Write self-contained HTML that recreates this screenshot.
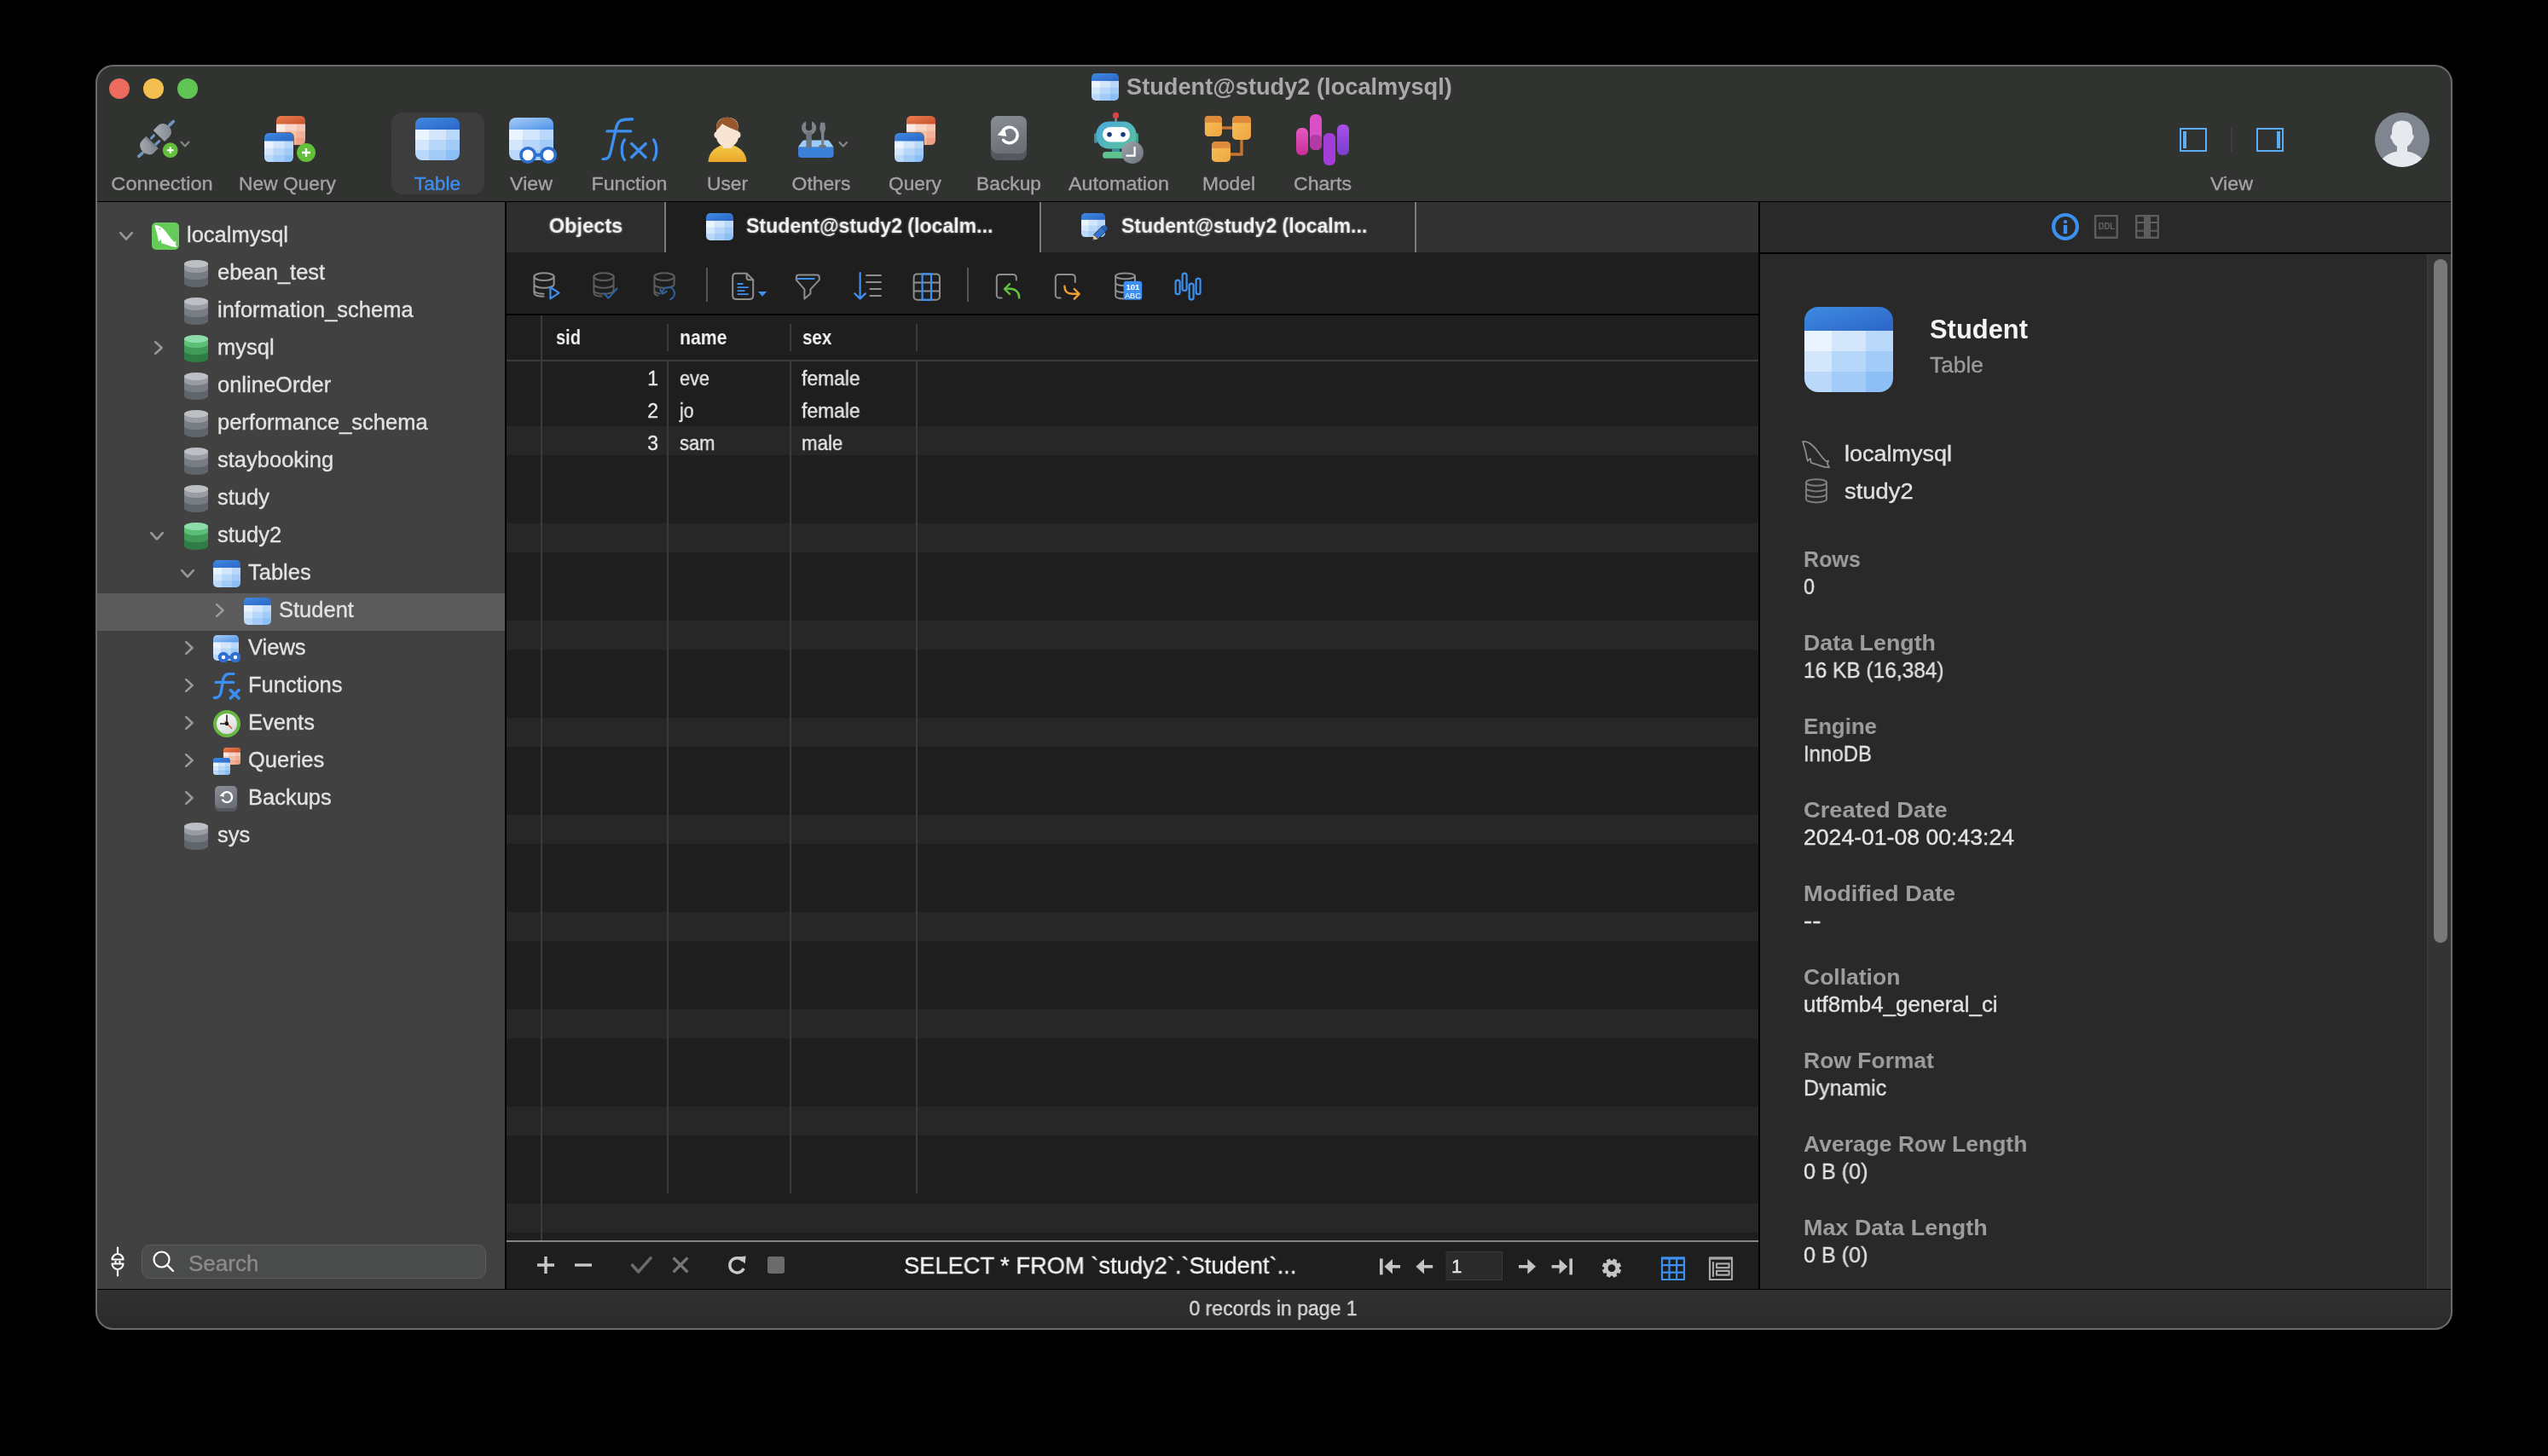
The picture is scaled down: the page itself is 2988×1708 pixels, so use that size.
<!DOCTYPE html>
<html><head><meta charset="utf-8"><title>Navicat</title>
<style>
html,body{margin:0;padding:0;background:#000;width:2988px;height:1708px;overflow:hidden}
body{position:relative;font-family:"Liberation Sans", sans-serif;-webkit-font-smoothing:antialiased}
svg{display:block}
.t{will-change:transform}
</style></head><body>
<svg width="0" height="0" style="position:absolute"><defs><linearGradient id="gBlueH" x1="0" y1="0" x2="1" y2="1"><stop offset="0" stop-color="#3f8be2"/><stop offset="1" stop-color="#2a64c5"/></linearGradient>
<linearGradient id="gOrH" x1="0" y1="0" x2="1" y2="1"><stop offset="0" stop-color="#ec7d50"/><stop offset="1" stop-color="#c6502c"/></linearGradient>
<linearGradient id="gViewH" x1="0" y1="0" x2="1" y2="1"><stop offset="0" stop-color="#a9cdf6"/><stop offset="1" stop-color="#4a92e8"/></linearGradient>
<linearGradient id="gGray" x1="0" y1="0" x2="0.3" y2="1"><stop offset="0" stop-color="#8a8f96"/><stop offset="1" stop-color="#6c7178"/></linearGradient>
<linearGradient id="gUser" x1="0" y1="0" x2="0" y2="1"><stop offset="0" stop-color="#f4cc48"/><stop offset="1" stop-color="#e9a62a"/></linearGradient>
<linearGradient id="gRobot" x1="0" y1="0" x2="1" y2="1"><stop offset="0" stop-color="#4aa9de"/><stop offset="1" stop-color="#5cc29a"/></linearGradient>
<linearGradient id="gClock" x1="0" y1="0" x2="1" y2="1"><stop offset="0" stop-color="#9ea4ab"/><stop offset="1" stop-color="#6c727a"/></linearGradient>
<linearGradient id="gModel" x1="0" y1="0" x2="1" y2="1"><stop offset="0" stop-color="#f7c056"/><stop offset="1" stop-color="#eea544"/></linearGradient>
<linearGradient id="gBar1" x1="0" y1="0" x2="0" y2="1"><stop offset="0" stop-color="#e25ac3"/><stop offset="1" stop-color="#c92f96"/></linearGradient>
<linearGradient id="gBar2" x1="0" y1="0" x2="0" y2="1"><stop offset="0" stop-color="#a84fe8"/><stop offset="1" stop-color="#7a3fcf"/></linearGradient>
<linearGradient id="gPlug" x1="0" y1="0" x2="1" y2="1"><stop offset="0" stop-color="#a9aeb5"/><stop offset="1" stop-color="#7e848c"/></linearGradient>

<symbol id="tbl" viewBox="0 0 52 50" preserveAspectRatio="none"><clipPath id="cTbl"><rect width="52" height="50" rx="8"/></clipPath><g clip-path="url(#cTbl)"><rect width="52" height="15" fill="url(#gBlueH)"/><rect x="0" y="14" width="17" height="13" fill="#eaf4fe"/><rect x="16" y="14" width="21" height="13" fill="#d3e6fc"/><rect x="36" y="14" width="16" height="13" fill="#bad9fa"/><rect x="0" y="26" width="17" height="13" fill="#d3e6fc"/><rect x="16" y="26" width="21" height="13" fill="#b7d7fa"/><rect x="36" y="26" width="16" height="13" fill="#a2cbf8"/><rect x="0" y="38" width="17" height="12" fill="#bad9fa"/><rect x="16" y="38" width="21" height="12" fill="#a2cbf8"/><rect x="36" y="38" width="16" height="12" fill="#8cbff6"/></g></symbol>

<symbol id="tblo" viewBox="0 0 52 50" preserveAspectRatio="none"><clipPath id="cTblo"><rect width="52" height="50" rx="8"/></clipPath><g clip-path="url(#cTblo)"><rect width="52" height="15" fill="url(#gOrH)"/><rect x="0" y="14" width="17" height="13" fill="#fbe9e3"/><rect x="16" y="14" width="21" height="13" fill="#f8d5c7"/><rect x="36" y="14" width="16" height="13" fill="#f6c6b2"/><rect x="0" y="26" width="17" height="13" fill="#f8d5c7"/><rect x="16" y="26" width="21" height="13" fill="#f5c0aa"/><rect x="36" y="26" width="16" height="13" fill="#f2b196"/><rect x="0" y="38" width="17" height="12" fill="#f6c6b2"/><rect x="16" y="38" width="21" height="12" fill="#f2b196"/><rect x="36" y="38" width="16" height="12" fill="#eea283"/></g></symbol>

<symbol id="db" viewBox="0 0 28 32" preserveAspectRatio="none">
<path d="M0 4.5V27.5A14 4.5 0 0 0 28 27.5V4.5Z" fill="#60656c"/>
<path d="M0 4.5V18.8A14 4.5 0 0 0 28 18.8V4.5Z" fill="#787d84"/>
<path d="M0 4.5V10.5A14 4.5 0 0 0 28 10.5V4.5Z" fill="#999da3"/>
<ellipse cx="14" cy="4.5" rx="14" ry="4.5" fill="#bcc0c4"/>
</symbol>

<symbol id="dbg" viewBox="0 0 28 32" preserveAspectRatio="none">
<path d="M0 4.5V27.5A14 4.5 0 0 0 28 27.5V4.5Z" fill="#2f7c45"/>
<path d="M0 4.5V18.8A14 4.5 0 0 0 28 18.8V4.5Z" fill="#409b58"/>
<path d="M0 4.5V10.5A14 4.5 0 0 0 28 10.5V4.5Z" fill="#5cbf76"/>
<ellipse cx="14" cy="4.5" rx="14" ry="4.5" fill="#8fdcab"/>
</symbol>

<symbol id="conn" viewBox="0 0 32 32">
<rect width="32" height="32" rx="5" fill="#67cb5a"/>
<path d="M3.2 3.2C5.6 3.1 8 3.5 9.6 4.6C13 6.6 15.6 9.6 18.5 13.4C21 16.8 23.6 20.4 26.6 22.8L28.8 22.4L27.6 25L29.6 29C26.2 29 23.4 28.4 20.8 27.3C18.4 26.3 15.6 25.5 13.2 24.8L11.6 24.4C11.2 22.8 11.2 21.2 10.8 20.2C9.6 20.8 8.8 21.6 8.2 22.6C7.4 20.4 7 17.8 6.6 15.4C6 12.2 5 9.2 4.4 7.2C4 5.6 3.6 4.2 3.2 3.2Z" fill="#fff"/>
<circle cx="9.4" cy="7.4" r="0.9" fill="#67cb5a"/>
</symbol>

<symbol id="views" viewBox="0 0 32 32">
<use href="#tblv" x="0" y="0" width="30" height="30"/>
<rect x="14" y="24.4" width="8" height="3.2" fill="#2a66c4"/>
<circle cx="12" cy="26" r="4.3" fill="#fff" stroke="#2f6fcf" stroke-width="4"/>
<circle cx="26" cy="26" r="4.3" fill="#fff" stroke="#2f6fcf" stroke-width="4"/>
</symbol>
<symbol id="tblv" viewBox="0 0 52 50" preserveAspectRatio="none"><clipPath id="cTblv"><rect width="52" height="50" rx="8"/></clipPath><g clip-path="url(#cTblv)"><rect width="52" height="15" fill="url(#gViewH)"/><rect x="0" y="14" width="17" height="13" fill="#eaf4fe"/><rect x="16" y="14" width="21" height="13" fill="#d3e6fc"/><rect x="36" y="14" width="16" height="13" fill="#bad9fa"/><rect x="0" y="26" width="17" height="13" fill="#d3e6fc"/><rect x="16" y="26" width="21" height="13" fill="#b7d7fa"/><rect x="36" y="26" width="16" height="13" fill="#a2cbf8"/><rect x="0" y="38" width="17" height="12" fill="#bad9fa"/><rect x="16" y="38" width="21" height="12" fill="#a2cbf8"/><rect x="36" y="38" width="16" height="12" fill="#8cbff6"/></g></symbol>

<symbol id="func" viewBox="0 0 32 32">
<path d="M1.6 29.4C6.4 29.8 8.4 27.6 9.4 21.8L11.4 9.6C12.2 4.4 14.2 1.6 19.4 1.4C21 1.3 22.6 1.4 23.8 1.6" fill="none" stroke="#3c8ff0" stroke-width="3.4" stroke-linecap="round"/>
<path d="M3.2 11.4H23.6" fill="none" stroke="#3c8ff0" stroke-width="3.4" stroke-linecap="round"/>
<path d="M20.4 20.6L30 30M30 20.6L20.4 30" fill="none" stroke="#3c8ff0" stroke-width="3.6" stroke-linecap="round"/>
</symbol>

<symbol id="events" viewBox="0 0 32 32">
<linearGradient id="gFace" x1="0" y1="0" x2="0.6" y2="1"><stop offset="0" stop-color="#ffffff"/><stop offset="1" stop-color="#d8dadc"/></linearGradient>
<circle cx="16" cy="16" r="16" fill="#67b843"/>
<circle cx="16" cy="16" r="12" fill="url(#gFace)"/>
<path d="M16 5.6V16H8" fill="none" stroke="#222" stroke-width="1.6"/>
<path d="M13.6 13.4L22 21.8" fill="none" stroke="#e4542c" stroke-width="1.5"/>
<circle cx="16" cy="16" r="2.2" fill="#111"/>
</symbol>

<symbol id="queries" viewBox="0 0 32 32">
<use href="#tblo" x="12" y="0" width="20" height="20"/>
<use href="#tbl" x="0" y="12" width="20" height="20"/>
</symbol>

<symbol id="backups" viewBox="0 0 32 32">
<rect x="2" y="1" width="26" height="30" rx="5" fill="#55585d"/>
<rect x="2" y="1" width="26" height="26" rx="5" fill="url(#gGray)"/>
<path d="M11.2 17.6A6 6 0 1 0 11.4 10.4" fill="none" stroke="#fff" stroke-width="2.4" stroke-linecap="round"/>
<path d="M7.6 12.6L11.8 8.4L13 13.8Z" fill="#fff"/>
</symbol>

<symbol id="chevd" viewBox="0 0 16 10"><path d="M1.2 1.2L8 8.6L14.8 1.2" fill="none" stroke="#9a9a9a" stroke-width="2.5" stroke-linecap="round" stroke-linejoin="round"/></symbol>
<symbol id="chevr" viewBox="0 0 10 16"><path d="M1.2 1.2L8.6 8L1.2 14.8" fill="none" stroke="#9a9a9a" stroke-width="2.5" stroke-linecap="round" stroke-linejoin="round"/></symbol>
</defs></svg>
<div style="position:absolute;left:112px;top:76px;width:2764px;height:1484px;border-radius:21px;background:#313331;overflow:hidden"><div style="position:absolute;left:-112px;top:-76px;width:2988px;height:1708px"><div style="position:absolute;left:112px;top:236px;width:2764px;height:1px;background:#000"></div><div style="position:absolute;left:128px;top:92px;width:24px;height:24px;border-radius:12px;background:#ed6a5e"></div><div style="position:absolute;left:168px;top:92px;width:24px;height:24px;border-radius:12px;background:#f4bf4f"></div><div style="position:absolute;left:208px;top:92px;width:24px;height:24px;border-radius:12px;background:#61c554"></div><svg style="position:absolute;left:1280px;top:86px;overflow:visible;" width="32" height="32"><use href="#tbl" width="32" height="32"/></svg><div class="t" style="position:absolute;left:1320.5px;top:89.14px;font-size:27px;line-height:27px;height:27px;color:#a9a9a9;font-weight:700;white-space:nowrap;transform:scaleX(1.0077);transform-origin:0 0;">Student@study2 (localmysql)</div><div style="position:absolute;left:458.5px;top:132px;width:109.5px;height:96px;background:#3c3d3c;border-radius:13px"></div><div class="t" style="position:absolute;left:-210px;width:800px;text-align:center;top:205.47px;font-size:22.6px;line-height:22.6px;height:22.6px;color:#a3a3a3;font-weight:400;white-space:nowrap;-webkit-text-stroke:0.35px #a3a3a3;transform:scaleX(1.0434);transform-origin:50% 0;">Connection</div><div class="t" style="position:absolute;left:-63px;width:800px;text-align:center;top:205.47px;font-size:22.6px;line-height:22.6px;height:22.6px;color:#a3a3a3;font-weight:400;white-space:nowrap;-webkit-text-stroke:0.35px #a3a3a3;transform:scaleX(1.0069);transform-origin:50% 0;">New Query</div><div class="t" style="position:absolute;left:113.20000000000005px;width:800px;text-align:center;top:205.47px;font-size:22.6px;line-height:22.6px;height:22.6px;color:#3e8ef4;font-weight:400;white-space:nowrap;-webkit-text-stroke:0.35px #3e8ef4;transform:scaleX(1.0067);transform-origin:50% 0;">Table</div><div class="t" style="position:absolute;left:222.89999999999998px;width:800px;text-align:center;top:205.47px;font-size:22.6px;line-height:22.6px;height:22.6px;color:#a3a3a3;font-weight:400;white-space:nowrap;-webkit-text-stroke:0.35px #a3a3a3;transform:scaleX(1.0239);transform-origin:50% 0;">View</div><div class="t" style="position:absolute;left:337.5px;width:800px;text-align:center;top:205.47px;font-size:22.6px;line-height:22.6px;height:22.6px;color:#a3a3a3;font-weight:400;white-space:nowrap;-webkit-text-stroke:0.35px #a3a3a3;transform:scaleX(1.0269);transform-origin:50% 0;">Function</div><div class="t" style="position:absolute;left:452.9px;width:800px;text-align:center;top:205.47px;font-size:22.6px;line-height:22.6px;height:22.6px;color:#a3a3a3;font-weight:400;white-space:nowrap;-webkit-text-stroke:0.35px #a3a3a3;transform:scaleX(1.0103);transform-origin:50% 0;">User</div><div class="t" style="position:absolute;left:563.4px;width:800px;text-align:center;top:205.47px;font-size:22.6px;line-height:22.6px;height:22.6px;color:#a3a3a3;font-weight:400;white-space:nowrap;-webkit-text-stroke:0.35px #a3a3a3;transform:scaleX(1.0144);transform-origin:50% 0;">Others</div><div class="t" style="position:absolute;left:672.7px;width:800px;text-align:center;top:205.47px;font-size:22.6px;line-height:22.6px;height:22.6px;color:#a3a3a3;font-weight:400;white-space:nowrap;-webkit-text-stroke:0.35px #a3a3a3;transform:scaleX(1.0042);transform-origin:50% 0;">Query</div><div class="t" style="position:absolute;left:782.75px;width:800px;text-align:center;top:205.47px;font-size:22.6px;line-height:22.6px;height:22.6px;color:#a3a3a3;font-weight:400;white-space:nowrap;-webkit-text-stroke:0.35px #a3a3a3;transform:scaleX(1.0070);transform-origin:50% 0;">Backup</div><div class="t" style="position:absolute;left:911.7px;width:800px;text-align:center;top:205.47px;font-size:22.6px;line-height:22.6px;height:22.6px;color:#a3a3a3;font-weight:400;white-space:nowrap;-webkit-text-stroke:0.35px #a3a3a3;transform:scaleX(1.0321);transform-origin:50% 0;">Automation</div><div class="t" style="position:absolute;left:1041px;width:800px;text-align:center;top:205.47px;font-size:22.6px;line-height:22.6px;height:22.6px;color:#a3a3a3;font-weight:400;white-space:nowrap;-webkit-text-stroke:0.35px #a3a3a3;transform:scaleX(1.0071);transform-origin:50% 0;">Model</div><div class="t" style="position:absolute;left:1150.65px;width:800px;text-align:center;top:205.47px;font-size:22.6px;line-height:22.6px;height:22.6px;color:#a3a3a3;font-weight:400;white-space:nowrap;-webkit-text-stroke:0.35px #a3a3a3;transform:scaleX(1.0232);transform-origin:50% 0;">Charts</div><div class="t" style="position:absolute;left:2217px;width:800px;text-align:center;top:205.47px;font-size:22.6px;line-height:22.6px;height:22.6px;color:#a3a3a3;font-weight:400;white-space:nowrap;-webkit-text-stroke:0.35px #a3a3a3;transform:scaleX(1.0281);transform-origin:50% 0;">View</div><div style="position:absolute;left:112px;top:237px;width:480px;height:1275px;background:#404140"></div><div style="position:absolute;left:592px;top:237px;width:2px;height:1275px;background:#000"></div><div style="position:absolute;left:114px;top:696px;width:478px;height:44px;background:#5b5b5b"></div><div style="position:absolute;left:594px;top:237px;width:1468px;height:59px;background:#323232"></div><div style="position:absolute;left:594px;top:237px;width:186px;height:59px;background:#2d2d2d"></div><div style="position:absolute;left:779px;top:237px;width:2px;height:59px;background:#7a7a7a"></div><div style="position:absolute;left:781px;top:237px;width:438px;height:59px;background:#1e1e1e"></div><div style="position:absolute;left:1219px;top:237px;width:2px;height:59px;background:#7a7a7a"></div><div style="position:absolute;left:1221px;top:237px;width:439px;height:59px;background:#2d2d2d"></div><div style="position:absolute;left:1659px;top:237px;width:2px;height:59px;background:#7a7a7a"></div><div style="position:absolute;left:594px;top:296px;width:1468px;height:72px;background:#1e1e1e"></div><div style="position:absolute;left:594px;top:368px;width:1468px;height:2px;background:#000"></div><div style="position:absolute;left:594px;top:370px;width:1468px;height:1086px;background:#1e1e1e"></div><div style="position:absolute;left:594px;top:500px;width:1468px;height:34px;background:#272727"></div><div style="position:absolute;left:594px;top:614px;width:1468px;height:34px;background:#272727"></div><div style="position:absolute;left:594px;top:728px;width:1468px;height:34px;background:#272727"></div><div style="position:absolute;left:594px;top:842px;width:1468px;height:34px;background:#272727"></div><div style="position:absolute;left:594px;top:956px;width:1468px;height:34px;background:#272727"></div><div style="position:absolute;left:594px;top:1070px;width:1468px;height:34px;background:#272727"></div><div style="position:absolute;left:594px;top:1184px;width:1468px;height:34px;background:#272727"></div><div style="position:absolute;left:594px;top:1298px;width:1468px;height:34px;background:#272727"></div><div style="position:absolute;left:594px;top:1412px;width:1468px;height:34px;background:#272727"></div><div style="position:absolute;left:594px;top:422px;width:1468px;height:2px;background:#3a3a3a"></div><div style="position:absolute;left:634px;top:370px;width:2px;height:1086px;background:#3b3b3b"></div><div style="position:absolute;left:782px;top:380px;width:2px;height:32px;background:#3b3b3b"></div><div style="position:absolute;left:782px;top:424px;width:2px;height:976px;background:#3b3b3b"></div><div style="position:absolute;left:926px;top:380px;width:2px;height:32px;background:#3b3b3b"></div><div style="position:absolute;left:926px;top:424px;width:2px;height:976px;background:#3b3b3b"></div><div style="position:absolute;left:1074px;top:380px;width:2px;height:32px;background:#3b3b3b"></div><div style="position:absolute;left:1074px;top:424px;width:2px;height:976px;background:#3b3b3b"></div><div style="position:absolute;left:594px;top:1455px;width:1468px;height:2px;background:#858585"></div><div style="position:absolute;left:594px;top:1457px;width:1468px;height:55px;background:#1e1e1e"></div><div style="position:absolute;left:2062px;top:237px;width:2px;height:1275px;background:#000"></div><div style="position:absolute;left:2064px;top:237px;width:812px;height:1275px;background:#292929"></div><div style="position:absolute;left:2064px;top:296px;width:812px;height:2px;background:#000"></div><div style="position:absolute;left:2846px;top:298px;width:30px;height:1214px;background:#343434;border-left:1px solid #3d3d3d"></div><div style="position:absolute;left:2854px;top:304px;width:16px;height:802px;background:#787878;border-radius:8px"></div><div style="position:absolute;left:112px;top:1512px;width:2764px;height:1px;background:#000"></div><div style="position:absolute;left:112px;top:1513px;width:2764px;height:47px;background:linear-gradient(#303030,#2a2a2a)"></div><div class="t" style="position:absolute;left:1093px;width:800px;text-align:center;top:1524.41px;font-size:23.5px;line-height:23.5px;height:23.5px;color:#dadada;font-weight:400;white-space:nowrap;-webkit-text-stroke:0.35px #dadada;transform:scaleX(0.9807);transform-origin:50% 0;">0 records in page 1</div><svg style="position:absolute;left:140px;top:271.5px;overflow:visible;" width="16" height="10"><use href="#chevd" width="16" height="10"/></svg><svg style="position:absolute;left:178px;top:261px;overflow:visible;" width="32" height="32"><use href="#conn" width="32" height="32"/></svg><div class="t" style="position:absolute;left:218.6px;top:263.11px;font-size:25.5px;line-height:25.5px;height:25.5px;color:#e2e2e2;font-weight:400;white-space:nowrap;-webkit-text-stroke:0.35px #e2e2e2;">localmysql</div><svg style="position:absolute;left:216px;top:305px;overflow:visible;" width="28" height="32"><use href="#db" width="28" height="32"/></svg><div class="t" style="position:absolute;left:254.6px;top:307.11px;font-size:25.5px;line-height:25.5px;height:25.5px;color:#e2e2e2;font-weight:400;white-space:nowrap;-webkit-text-stroke:0.35px #e2e2e2;">ebean_test</div><svg style="position:absolute;left:216px;top:349px;overflow:visible;" width="28" height="32"><use href="#db" width="28" height="32"/></svg><div class="t" style="position:absolute;left:254.6px;top:351.11px;font-size:25.5px;line-height:25.5px;height:25.5px;color:#e2e2e2;font-weight:400;white-space:nowrap;-webkit-text-stroke:0.35px #e2e2e2;">information_schema</div><svg style="position:absolute;left:181px;top:400px;overflow:visible;" width="10" height="16"><use href="#chevr" width="10" height="16"/></svg><svg style="position:absolute;left:216px;top:393px;overflow:visible;" width="28" height="32"><use href="#dbg" width="28" height="32"/></svg><div class="t" style="position:absolute;left:254.6px;top:395.11px;font-size:25.5px;line-height:25.5px;height:25.5px;color:#e2e2e2;font-weight:400;white-space:nowrap;-webkit-text-stroke:0.35px #e2e2e2;">mysql</div><svg style="position:absolute;left:216px;top:437px;overflow:visible;" width="28" height="32"><use href="#db" width="28" height="32"/></svg><div class="t" style="position:absolute;left:254.6px;top:439.11px;font-size:25.5px;line-height:25.5px;height:25.5px;color:#e2e2e2;font-weight:400;white-space:nowrap;-webkit-text-stroke:0.35px #e2e2e2;">onlineOrder</div><svg style="position:absolute;left:216px;top:481px;overflow:visible;" width="28" height="32"><use href="#db" width="28" height="32"/></svg><div class="t" style="position:absolute;left:254.6px;top:483.11px;font-size:25.5px;line-height:25.5px;height:25.5px;color:#e2e2e2;font-weight:400;white-space:nowrap;-webkit-text-stroke:0.35px #e2e2e2;">performance_schema</div><svg style="position:absolute;left:216px;top:525px;overflow:visible;" width="28" height="32"><use href="#db" width="28" height="32"/></svg><div class="t" style="position:absolute;left:254.6px;top:527.11px;font-size:25.5px;line-height:25.5px;height:25.5px;color:#e2e2e2;font-weight:400;white-space:nowrap;-webkit-text-stroke:0.35px #e2e2e2;">staybooking</div><svg style="position:absolute;left:216px;top:569px;overflow:visible;" width="28" height="32"><use href="#db" width="28" height="32"/></svg><div class="t" style="position:absolute;left:254.6px;top:571.11px;font-size:25.5px;line-height:25.5px;height:25.5px;color:#e2e2e2;font-weight:400;white-space:nowrap;-webkit-text-stroke:0.35px #e2e2e2;">study</div><svg style="position:absolute;left:176px;top:623.5px;overflow:visible;" width="16" height="10"><use href="#chevd" width="16" height="10"/></svg><svg style="position:absolute;left:216px;top:613px;overflow:visible;" width="28" height="32"><use href="#dbg" width="28" height="32"/></svg><div class="t" style="position:absolute;left:254.6px;top:615.11px;font-size:25.5px;line-height:25.5px;height:25.5px;color:#e2e2e2;font-weight:400;white-space:nowrap;-webkit-text-stroke:0.35px #e2e2e2;">study2</div><svg style="position:absolute;left:212px;top:667.5px;overflow:visible;" width="16" height="10"><use href="#chevd" width="16" height="10"/></svg><svg style="position:absolute;left:250px;top:657px;overflow:visible;" width="32" height="32"><use href="#tbl" width="32" height="32"/></svg><div class="t" style="position:absolute;left:290.6px;top:659.11px;font-size:25.5px;line-height:25.5px;height:25.5px;color:#e2e2e2;font-weight:400;white-space:nowrap;-webkit-text-stroke:0.35px #e2e2e2;">Tables</div><svg style="position:absolute;left:253px;top:708px;overflow:visible;" width="10" height="16"><use href="#chevr" width="10" height="16"/></svg><svg style="position:absolute;left:286px;top:701px;overflow:visible;" width="32" height="32"><use href="#tbl" width="32" height="32"/></svg><div class="t" style="position:absolute;left:326.6px;top:703.11px;font-size:25.5px;line-height:25.5px;height:25.5px;color:#e2e2e2;font-weight:400;white-space:nowrap;-webkit-text-stroke:0.35px #e2e2e2;">Student</div><svg style="position:absolute;left:217px;top:752px;overflow:visible;" width="10" height="16"><use href="#chevr" width="10" height="16"/></svg><svg style="position:absolute;left:250px;top:745px;overflow:visible;" width="32" height="32"><use href="#views" width="32" height="32"/></svg><div class="t" style="position:absolute;left:290.6px;top:747.11px;font-size:25.5px;line-height:25.5px;height:25.5px;color:#e2e2e2;font-weight:400;white-space:nowrap;-webkit-text-stroke:0.35px #e2e2e2;">Views</div><svg style="position:absolute;left:217px;top:796px;overflow:visible;" width="10" height="16"><use href="#chevr" width="10" height="16"/></svg><svg style="position:absolute;left:250px;top:789px;overflow:visible;" width="32" height="32"><use href="#func" width="32" height="32"/></svg><div class="t" style="position:absolute;left:290.6px;top:791.11px;font-size:25.5px;line-height:25.5px;height:25.5px;color:#e2e2e2;font-weight:400;white-space:nowrap;-webkit-text-stroke:0.35px #e2e2e2;">Functions</div><svg style="position:absolute;left:217px;top:840px;overflow:visible;" width="10" height="16"><use href="#chevr" width="10" height="16"/></svg><svg style="position:absolute;left:250px;top:833px;overflow:visible;" width="32" height="32"><use href="#events" width="32" height="32"/></svg><div class="t" style="position:absolute;left:290.6px;top:835.11px;font-size:25.5px;line-height:25.5px;height:25.5px;color:#e2e2e2;font-weight:400;white-space:nowrap;-webkit-text-stroke:0.35px #e2e2e2;">Events</div><svg style="position:absolute;left:217px;top:884px;overflow:visible;" width="10" height="16"><use href="#chevr" width="10" height="16"/></svg><svg style="position:absolute;left:250px;top:877px;overflow:visible;" width="32" height="32"><use href="#queries" width="32" height="32"/></svg><div class="t" style="position:absolute;left:290.6px;top:879.11px;font-size:25.5px;line-height:25.5px;height:25.5px;color:#e2e2e2;font-weight:400;white-space:nowrap;-webkit-text-stroke:0.35px #e2e2e2;">Queries</div><svg style="position:absolute;left:217px;top:928px;overflow:visible;" width="10" height="16"><use href="#chevr" width="10" height="16"/></svg><svg style="position:absolute;left:250px;top:921px;overflow:visible;" width="32" height="32"><use href="#backups" width="32" height="32"/></svg><div class="t" style="position:absolute;left:290.6px;top:923.11px;font-size:25.5px;line-height:25.5px;height:25.5px;color:#e2e2e2;font-weight:400;white-space:nowrap;-webkit-text-stroke:0.35px #e2e2e2;">Backups</div><svg style="position:absolute;left:216px;top:965px;overflow:visible;" width="28" height="32"><use href="#db" width="28" height="32"/></svg><div class="t" style="position:absolute;left:254.6px;top:967.11px;font-size:25.5px;line-height:25.5px;height:25.5px;color:#e2e2e2;font-weight:400;white-space:nowrap;-webkit-text-stroke:0.35px #e2e2e2;">sys</div><div style="position:absolute;left:166px;top:1460px;width:402px;height:38px;border-radius:10px;background:#4a4b4b;border:1px solid #5d5e5e"></div><svg style="position:absolute;left:178px;top:1466px;overflow:visible;" width="30" height="30" viewBox="0 0 30 30"><circle cx="11.5" cy="11.5" r="9" fill="none" stroke="#fff" stroke-width="2.2"/><path d="M18 18L25 25" stroke="#fff" stroke-width="2.4" stroke-linecap="round"/></svg><div class="t" style="position:absolute;left:221px;top:1468.99px;font-size:26px;line-height:26px;height:26px;color:#8b8b8b;font-weight:400;white-space:nowrap;-webkit-text-stroke:0.35px #8b8b8b;transform:scaleX(0.9992);transform-origin:0 0;">Search</div><svg style="position:absolute;left:128px;top:1462px;overflow:visible;" width="20" height="36" viewBox="0 0 20 36"><path d="M10 1.5V7M10 29V34.5" stroke="#fff" stroke-width="2.2" stroke-linecap="round"/><path d="M3.5 15.5A6.5 6.5 0 0 1 16.5 15.5ZM3.5 20.5A6.5 6.5 0 0 0 16.5 20.5Z" fill="none" stroke="#fff" stroke-width="2.2" stroke-linejoin="round"/><path d="M7.5 20.5V17M12.5 20.5V17" stroke="#fff" stroke-width="2"/></svg><div class="t" style="position:absolute;left:286.79999999999995px;width:800px;text-align:center;top:252.96px;font-size:24.5px;line-height:24.5px;height:24.5px;color:#f2f2f2;font-weight:700;white-space:nowrap;transform:scaleX(0.9603);transform-origin:50% 0;text-shadow:0 0 3px rgba(255,255,255,0.45)">Objects</div><svg style="position:absolute;left:828px;top:250px;overflow:visible;" width="32" height="32"><use href="#tbl" width="32" height="32"/></svg><div class="t" style="position:absolute;left:875px;top:252.96px;font-size:24.5px;line-height:24.5px;height:24.5px;color:#f2f2f2;font-weight:700;white-space:nowrap;transform:scaleX(0.9426);transform-origin:0 0;text-shadow:0 0 3px rgba(255,255,255,0.45)">Student@study2 (localm...</div><svg style="position:absolute;left:1268px;top:250px;overflow:visible;" width="28" height="28"><use href="#tbl" width="28" height="28"/></svg><svg style="position:absolute;left:1278px;top:262px;overflow:visible;" width="24" height="22" viewBox="0 0 24 22"><g transform="translate(12 11) rotate(-45)"><rect x="-7" y="-3.6" width="14" height="7.2" fill="#3276d2" stroke="#232323" stroke-width="0.8"/><path d="M4.6 -3.6H7A3.6 3.6 0 0 1 7 3.6H4.6Z" fill="#2560b4"/><path d="M-7 -3.6L-12 0L-7 3.6Z" fill="#f0c48e"/><path d="M-10.2 -1.3L-12.6 0L-10.2 1.3Z" fill="#2a64c0"/></g></svg><div class="t" style="position:absolute;left:1315px;top:252.96px;font-size:24.5px;line-height:24.5px;height:24.5px;color:#f2f2f2;font-weight:700;white-space:nowrap;transform:scaleX(0.9390);transform-origin:0 0;text-shadow:0 0 3px rgba(255,255,255,0.45)">Student@study2 (localm...</div><div class="t" style="position:absolute;left:652.4px;top:385.02px;font-size:23.6px;line-height:23.6px;height:23.6px;color:#f2f2f2;font-weight:700;white-space:nowrap;transform:scaleX(0.8504);transform-origin:0 0;">sid</div><div class="t" style="position:absolute;left:796.5px;top:385.02px;font-size:23.6px;line-height:23.6px;height:23.6px;color:#f2f2f2;font-weight:700;white-space:nowrap;transform:scaleX(0.9003);transform-origin:0 0;">name</div><div class="t" style="position:absolute;left:940.5px;top:385.02px;font-size:23.6px;line-height:23.6px;height:23.6px;color:#f2f2f2;font-weight:700;white-space:nowrap;transform:scaleX(0.8713);transform-origin:0 0;">sex</div><div class="t" style="position:absolute;left:-28px;width:800px;text-align:right;top:432.73px;font-size:23px;line-height:23px;height:23px;color:#e6e6e6;font-weight:400;white-space:nowrap;-webkit-text-stroke:0.35px #e6e6e6;">1</div><div class="t" style="position:absolute;left:796.5px;top:432.73px;font-size:23px;line-height:23px;height:23px;color:#e6e6e6;font-weight:400;white-space:nowrap;-webkit-text-stroke:0.35px #e6e6e6;transform:scaleX(0.9440);transform-origin:0 0;">eve</div><div class="t" style="position:absolute;left:940.4px;top:432.73px;font-size:23px;line-height:23px;height:23px;color:#e6e6e6;font-weight:400;white-space:nowrap;-webkit-text-stroke:0.35px #e6e6e6;transform:scaleX(0.9939);transform-origin:0 0;">female</div><div class="t" style="position:absolute;left:-28px;width:800px;text-align:right;top:470.73px;font-size:23px;line-height:23px;height:23px;color:#e6e6e6;font-weight:400;white-space:nowrap;-webkit-text-stroke:0.35px #e6e6e6;">2</div><div class="t" style="position:absolute;left:796.5px;top:470.73px;font-size:23px;line-height:23px;height:23px;color:#e6e6e6;font-weight:400;white-space:nowrap;-webkit-text-stroke:0.35px #e6e6e6;transform:scaleX(0.9313);transform-origin:0 0;">jo</div><div class="t" style="position:absolute;left:940.4px;top:470.73px;font-size:23px;line-height:23px;height:23px;color:#e6e6e6;font-weight:400;white-space:nowrap;-webkit-text-stroke:0.35px #e6e6e6;transform:scaleX(0.9939);transform-origin:0 0;">female</div><div class="t" style="position:absolute;left:-28px;width:800px;text-align:right;top:508.73px;font-size:23px;line-height:23px;height:23px;color:#e6e6e6;font-weight:400;white-space:nowrap;-webkit-text-stroke:0.35px #e6e6e6;">3</div><div class="t" style="position:absolute;left:796.5px;top:508.73px;font-size:23px;line-height:23px;height:23px;color:#e6e6e6;font-weight:400;white-space:nowrap;-webkit-text-stroke:0.35px #e6e6e6;transform:scaleX(0.9552);transform-origin:0 0;">sam</div><div class="t" style="position:absolute;left:940.4px;top:508.73px;font-size:23px;line-height:23px;height:23px;color:#e6e6e6;font-weight:400;white-space:nowrap;-webkit-text-stroke:0.35px #e6e6e6;transform:scaleX(0.9686);transform-origin:0 0;">male</div><div class="t" style="position:absolute;left:1060px;top:1471.12px;font-size:27.5px;line-height:27.5px;height:27.5px;color:#f2f2f2;font-weight:400;white-space:nowrap;-webkit-text-stroke:0.35px #f2f2f2;transform:scaleX(0.9920);transform-origin:0 0;">SELECT * FROM `study2`.`Student`...</div><svg style="position:absolute;left:2116px;top:360px;overflow:visible;" width="104" height="100"><use href="#tbl" width="104" height="100"/></svg><div class="t" style="position:absolute;left:2263px;top:371.84px;font-size:30.9px;line-height:30.9px;height:30.9px;color:#f4f4f4;font-weight:700;white-space:nowrap;transform:scaleX(0.9999);transform-origin:0 0;">Student</div><div class="t" style="position:absolute;left:2263px;top:415.39px;font-size:26px;line-height:26px;height:26px;color:#9b9b9b;font-weight:400;white-space:nowrap;-webkit-text-stroke:0.35px #9b9b9b;transform:scaleX(1.0118);transform-origin:0 0;">Table</div><div class="t" style="position:absolute;left:2163px;top:518.99px;font-size:26px;line-height:26px;height:26px;color:#e0e0e0;font-weight:400;white-space:nowrap;-webkit-text-stroke:0.35px #e0e0e0;transform:scaleX(1.0382);transform-origin:0 0;">localmysql</div><div class="t" style="position:absolute;left:2163px;top:563.39px;font-size:26px;line-height:26px;height:26px;color:#e0e0e0;font-weight:400;white-space:nowrap;-webkit-text-stroke:0.35px #e0e0e0;transform:scaleX(1.0536);transform-origin:0 0;">study2</div><div class="t" style="position:absolute;left:2115px;top:643.37px;font-size:26.5px;line-height:26.5px;height:26.5px;color:#9d9d9d;font-weight:700;white-space:nowrap;transform:scaleX(0.9452);transform-origin:0 0;">Rows</div><div class="t" style="position:absolute;left:2115px;top:676.41px;font-size:25.5px;line-height:25.5px;height:25.5px;color:#e2e2e2;font-weight:400;white-space:nowrap;-webkit-text-stroke:0.35px #e2e2e2;transform:scaleX(0.9169);transform-origin:0 0;">0</div><div class="t" style="position:absolute;left:2115px;top:741.37px;font-size:26.5px;line-height:26.5px;height:26.5px;color:#9d9d9d;font-weight:700;white-space:nowrap;transform:scaleX(1.0123);transform-origin:0 0;">Data Length</div><div class="t" style="position:absolute;left:2115px;top:774.41px;font-size:25.5px;line-height:25.5px;height:25.5px;color:#e2e2e2;font-weight:400;white-space:nowrap;-webkit-text-stroke:0.35px #e2e2e2;transform:scaleX(0.9596);transform-origin:0 0;">16 KB (16,384)</div><div class="t" style="position:absolute;left:2115px;top:839.37px;font-size:26.5px;line-height:26.5px;height:26.5px;color:#9d9d9d;font-weight:700;white-space:nowrap;transform:scaleX(0.9734);transform-origin:0 0;">Engine</div><div class="t" style="position:absolute;left:2115px;top:872.41px;font-size:25.5px;line-height:25.5px;height:25.5px;color:#e2e2e2;font-weight:400;white-space:nowrap;-webkit-text-stroke:0.35px #e2e2e2;transform:scaleX(0.9407);transform-origin:0 0;">InnoDB</div><div class="t" style="position:absolute;left:2115px;top:937.37px;font-size:26.5px;line-height:26.5px;height:26.5px;color:#9d9d9d;font-weight:700;white-space:nowrap;transform:scaleX(1.0313);transform-origin:0 0;">Created Date</div><div class="t" style="position:absolute;left:2115px;top:970.41px;font-size:25.5px;line-height:25.5px;height:25.5px;color:#e2e2e2;font-weight:400;white-space:nowrap;-webkit-text-stroke:0.35px #e2e2e2;transform:scaleX(1.0431);transform-origin:0 0;">2024-01-08 00:43:24</div><div class="t" style="position:absolute;left:2115px;top:1035.37px;font-size:26.5px;line-height:26.5px;height:26.5px;color:#9d9d9d;font-weight:700;white-space:nowrap;transform:scaleX(1.0257);transform-origin:0 0;">Modified Date</div><div class="t" style="position:absolute;left:2115px;top:1068.41px;font-size:25.5px;line-height:25.5px;height:25.5px;color:#e2e2e2;font-weight:400;white-space:nowrap;-webkit-text-stroke:0.35px #e2e2e2;transform:scaleX(1.2071);transform-origin:0 0;">--</div><div class="t" style="position:absolute;left:2115px;top:1133.37px;font-size:26.5px;line-height:26.5px;height:26.5px;color:#9d9d9d;font-weight:700;white-space:nowrap;transform:scaleX(0.9996);transform-origin:0 0;">Collation</div><div class="t" style="position:absolute;left:2115px;top:1166.41px;font-size:25.5px;line-height:25.5px;height:25.5px;color:#e2e2e2;font-weight:400;white-space:nowrap;-webkit-text-stroke:0.35px #e2e2e2;transform:scaleX(1.0161);transform-origin:0 0;">utf8mb4_general_ci</div><div class="t" style="position:absolute;left:2115px;top:1231.37px;font-size:26.5px;line-height:26.5px;height:26.5px;color:#9d9d9d;font-weight:700;white-space:nowrap;transform:scaleX(0.9986);transform-origin:0 0;">Row Format</div><div class="t" style="position:absolute;left:2115px;top:1264.41px;font-size:25.5px;line-height:25.5px;height:25.5px;color:#e2e2e2;font-weight:400;white-space:nowrap;-webkit-text-stroke:0.35px #e2e2e2;transform:scaleX(0.9799);transform-origin:0 0;">Dynamic</div><div class="t" style="position:absolute;left:2115px;top:1329.37px;font-size:26.5px;line-height:26.5px;height:26.5px;color:#9d9d9d;font-weight:700;white-space:nowrap;transform:scaleX(0.9989);transform-origin:0 0;">Average Row Length</div><div class="t" style="position:absolute;left:2115px;top:1362.41px;font-size:25.5px;line-height:25.5px;height:25.5px;color:#e2e2e2;font-weight:400;white-space:nowrap;-webkit-text-stroke:0.35px #e2e2e2;transform:scaleX(0.9879);transform-origin:0 0;">0 B (0)</div><div class="t" style="position:absolute;left:2115px;top:1427.37px;font-size:26.5px;line-height:26.5px;height:26.5px;color:#9d9d9d;font-weight:700;white-space:nowrap;transform:scaleX(1.0169);transform-origin:0 0;">Max Data Length</div><div class="t" style="position:absolute;left:2115px;top:1460.41px;font-size:25.5px;line-height:25.5px;height:25.5px;color:#e2e2e2;font-weight:400;white-space:nowrap;-webkit-text-stroke:0.35px #e2e2e2;transform:scaleX(0.9879);transform-origin:0 0;">0 B (0)</div><svg style="position:absolute;left:0;top:0" width="2988" height="1708" viewBox="0 0 2988 1708"><!-- ========== TOOLBAR ========== -->
<!-- Connection plug -->
<g>
<path d="M198.8 146.9L203.3 142.5M162.7 183.4L167 179.6" stroke="#6f96c0" stroke-width="3.6" stroke-linecap="round"/>
<path d="M177.6 162L180.4 159M182.9 169.2L186.7 165.6" stroke="#6f96c0" stroke-width="3.2" stroke-linecap="round"/>
<g transform="translate(186.4 159.5) rotate(-45)"><path d="M0 -9.35H8.6A7.6 9.35 0 0 1 16.2 0A7.6 9.35 0 0 1 8.6 9.35H0Z" fill="url(#gPlug)"/></g>
<g transform="translate(178.5 167) rotate(-45)"><path d="M0 -10V10H-7.6A8 10 0 0 1 -15.6 0A8 10 0 0 1 -7.6 -10Z" fill="url(#gPlug)"/><rect x="-2.6" y="-10" width="2.6" height="20" fill="#7c838b"/></g>
<circle cx="199.7" cy="176.2" r="8.9" fill="#62c03a"/>
<path d="M199.7 172.3V180.1M195.8 176.2H203.6" stroke="#fff" stroke-width="2"/>
<path d="M212.5 166.5L217 171.5L221.5 166.5" fill="none" stroke="#8a8a8a" stroke-width="2" stroke-linecap="round" stroke-linejoin="round"/>
</g>
<!-- New Query -->
<use href="#tblo" x="324" y="136" width="34" height="34"/>
<rect x="309" y="155" width="36" height="36" rx="6" fill="#2a2a2a" opacity="0.6"/>
<use href="#tbl" x="310" y="156" width="34" height="34"/>
<circle cx="359" cy="179" r="11" fill="#62c03a"/>
<path d="M359 174V184M354 179H364" stroke="#fff" stroke-width="2.4"/>
<!-- Table -->
<use href="#tbl" x="487" y="138" width="52" height="50"/>
<!-- View -->
<use href="#tblv" x="597" y="138" width="52" height="50"/>
<rect x="627" y="179.8" width="8" height="4" fill="#2f6fcf"/>
<circle cx="619.1" cy="181.9" r="8.2" fill="#fff" stroke="#2f6fcf" stroke-width="3.6"/>
<circle cx="643.1" cy="181.9" r="8.2" fill="#fff" stroke="#2f6fcf" stroke-width="3.6"/>
<!-- Function -->
<g fill="none" stroke="#3d8ff0" stroke-linecap="round">
<path d="M707 186.6C712.5 186.8 714.6 185.4 716.4 177L722.6 150C724.4 142 727 139.8 741.6 139.8" stroke-width="3.4"/>
<path d="M712 153.9H739.6" stroke-width="3.4"/>
<path d="M732.4 164C728.2 170 728.2 182 732.4 187.6" stroke-width="3.2"/>
<path d="M766.6 164C770.8 170 770.8 182 766.6 187.6" stroke-width="3.2"/>
<path d="M740.6 168.6L757.2 184.4M757.2 168.6L740.6 184.4" stroke-width="3.4"/>
</g>
<!-- User -->
<g>
<path d="M830.5 190A22.5 20.5 0 0 1 875.5 190Z" fill="url(#gUser)"/>
<rect x="847.5" y="164" width="11" height="10" fill="#f0d8c4"/>
<ellipse cx="840.4" cy="158.3" rx="2.9" ry="3.8" fill="#f6e2d2"/>
<ellipse cx="865.6" cy="158.3" rx="2.9" ry="3.8" fill="#f6e2d2"/>
<path d="M840 150C840 141 846 137.7 853 137.7C860 137.7 866 141 866 150V160C866 168 858 173.5 853 173.5C848 173.5 840 168 840 160Z" fill="#f8e4d3"/>
<path d="M840 153C839 143 845 137.7 853 137.7C861 137.7 867 143 866 154C861 152 852 149 847 145C845 148 842 151 840 153Z" fill="#98582b"/>
</g>
<!-- Others -->
<g>
<path d="M936 172.4H977.6V181.6C977.6 183.6 976 185.1 974 185.1H939.6C937.6 185.1 936 183.6 936 181.6Z" fill="#3a7fd8"/>
<path d="M943.6 164.4H970C971.4 164.4 972.4 165 973 166L977.6 172.6H936L940.6 166C941.2 165 942.2 164.4 943.6 164.4Z" fill="#9dcdf8"/>
<circle cx="948.6" cy="150" r="8.6" fill="#7d838b"/>
<circle cx="948.6" cy="149.6" r="3.8" fill="#313331"/>
<rect x="945.2" y="140" width="6.8" height="9.6" fill="#313331"/>
<rect x="945.4" y="155" width="6.4" height="18" fill="#6f757d"/>
<path d="M962.2 143.8H967.2L968.2 151L966.4 156.4V170H963V156.4L961.2 151Z" fill="#7d838b"/>
<ellipse cx="964.6" cy="171.4" rx="4.4" ry="1.6" fill="#6e747c"/>
<path d="M984.5 167L988.8 171.6L993.1 167" fill="none" stroke="#8a8a8a" stroke-width="2" stroke-linecap="round" stroke-linejoin="round"/>
</g>
<!-- Query -->
<use href="#tblo" x="1063" y="136" width="34" height="34"/>
<rect x="1048" y="155" width="36" height="36" rx="6" fill="#2a2a2a" opacity="0.6"/>
<use href="#tbl" x="1049" y="156" width="34" height="34"/>
<!-- Backup -->
<g>
<rect x="1162" y="136" width="42" height="52" rx="8" fill="#55585e"/>
<rect x="1162" y="136" width="42" height="44" rx="8" fill="url(#gGray)"/>
<path d="M1176.5 164.2A9.3 9.3 0 1 0 1176.6 152.6" fill="none" stroke="#fff" stroke-width="3.4" stroke-linecap="round"/>
<path d="M1169.6 158.4L1177.6 149.4L1180.4 160Z" fill="#fff"/>
</g>
<!-- Automation -->
<g>
<path d="M1308.5 138V144" stroke="#8b9096" stroke-width="2.4"/>
<circle cx="1308.5" cy="135.4" r="3.6" fill="#e04048"/>
<rect x="1283" y="156" width="4" height="12" rx="2" fill="#3a8fa0"/>
<rect x="1331" y="156" width="4" height="12" rx="2" fill="#3fa38f"/>
<rect x="1285.5" y="142.6" width="47" height="32" rx="15" fill="url(#gRobot)"/>
<rect x="1293" y="149" width="32" height="17.6" rx="8.8" fill="#fff"/>
<circle cx="1301" cy="157.8" r="2.8" fill="#173a78"/>
<circle cx="1317" cy="157.8" r="2.8" fill="#173a78"/>
<rect x="1304" y="174" width="9" height="5" fill="#3c8f9a"/>
<rect x="1293" y="178" width="33" height="7.8" rx="3.9" fill="#5ec38f"/>
<circle cx="1328" cy="179" r="13" fill="url(#gClock)"/>
<path d="M1330.6 172V182.6H1320.4" fill="none" stroke="#fff" stroke-width="2.2"/>
</g>
<!-- Model -->
<g>
<path d="M1432 150H1445M1456 163V181H1443" fill="none" stroke="#c8742e" stroke-width="3.4"/>
<clipPath id="cM1"><rect x="1412.6" y="135.8" width="20.4" height="24.2" rx="4.5"/></clipPath>
<g clip-path="url(#cM1)"><rect x="1412.6" y="135.8" width="20.4" height="24.2" fill="url(#gModel)"/><rect x="1412.6" y="135.8" width="20.4" height="8" fill="#e08b3c"/></g>
<clipPath id="cM2"><rect x="1445" y="136" width="22" height="28" rx="5"/></clipPath>
<g clip-path="url(#cM2)"><rect x="1445" y="136" width="22" height="28" fill="url(#gModel)"/><rect x="1445" y="136" width="22" height="8.2" fill="#e08b3c"/></g>
<clipPath id="cM3"><rect x="1420.8" y="166" width="22.2" height="24" rx="5"/></clipPath>
<g clip-path="url(#cM3)"><rect x="1420.8" y="166" width="22.2" height="24" fill="url(#gModel)"/><rect x="1420.8" y="166" width="22.2" height="7.8" fill="#e08b3c"/></g>
</g>
<!-- Charts -->
<g>
<rect x="1520" y="150" width="14" height="32" rx="6" fill="url(#gBar1)"/>
<rect x="1536" y="134" width="14" height="42" rx="6" fill="#d94fc6"/>
<rect x="1536" y="158" width="14" height="18" rx="6" fill="#b13aa5"/>
<rect x="1552" y="156" width="14" height="38" rx="6" fill="#a23ed6"/>
<rect x="1568" y="146" width="14" height="36" rx="6" fill="url(#gBar2)"/>
</g>
<!-- View (right) -->
<g fill="none" stroke="#5aaef5" stroke-width="2">
<rect x="2557" y="151" width="30" height="26"/>
<rect x="2647" y="151" width="30" height="26"/>
</g>
<rect x="2560" y="154" width="4" height="20" fill="#5aaef5"/>
<rect x="2670" y="154" width="4" height="20" fill="#5aaef5"/>
<rect x="2616.5" y="150" width="1" height="28" fill="#4a4b4a"/>
<!-- Avatar -->
<clipPath id="cAv"><circle cx="2817" cy="164" r="32"/></clipPath>
<circle cx="2817" cy="164" r="32" fill="#7f8690"/>
<g clip-path="url(#cAv)" fill="#e6e9ee">
<path d="M2805 153C2805.4 145 2810 141.6 2817 141.6C2824 141.6 2828.6 145 2829 153V157.4C2831 158.4 2831.4 161.4 2829.4 163.4C2827.6 168.4 2822.8 173.6 2817 173.6C2811.2 173.6 2806.4 168.4 2804.6 163.4C2802.6 161.4 2803 158.4 2805 157.4Z"/>
<rect x="2811" y="170" width="12" height="10"/>
<ellipse cx="2817" cy="200.5" rx="29" ry="23.6"/>
</g>
<!-- ========== GRID TOOLBAR ========== -->
<g fill="none" stroke-linecap="round" stroke-linejoin="round">
<!-- db play -->
<g fill="none" stroke-linecap="round" stroke-linejoin="round">
<g stroke="#8e8e8e" stroke-width="2">
<ellipse cx="638" cy="324.6" rx="11.6" ry="4.4"/>
<path d="M626.4 324.6V343.4C626.4 345.8 630.6 347.6 637.6 347.8M626.4 333.4C626.4 335.8 631.6 337.8 638 337.8C644.4 337.8 649.6 335.8 649.6 333.4V324.6M626.4 340.6C626.4 343 630.6 344.6 637.6 344.8"/>
</g>
<path d="M645.4 337V350.4L655.6 343.7Z" stroke="#3d8ff0" stroke-width="2.2"/>
<!-- db check -->
<g stroke="#5c5c5c" stroke-width="2">
<ellipse cx="708" cy="324.6" rx="11.6" ry="4.4"/>
<path d="M696.4 324.6V343.4C696.4 345.8 700.6 347.4 705.6 347.6M696.4 333.4C696.4 335.8 701.6 337.8 708 337.8C714.4 337.8 719.6 335.8 719.6 333.4V324.6M696.4 340.6C696.4 343 701.6 344.8 708 344.8C714.4 344.8 719.6 343 719.6 340.6V333.4"/>
</g>
<path d="M708.4 344.2L713.4 349.8L723.6 338.6" stroke="#2d5f9e" stroke-width="2.2"/>
<!-- db undo -->
<g stroke="#5c5c5c" stroke-width="2">
<ellipse cx="779" cy="324.6" rx="11.6" ry="4.4"/>
<path d="M767.4 324.6V343.4C767.4 345 769 346 771.4 346.8M767.4 333.4C767.4 335.8 772.6 337.8 779 337.8C785.4 337.8 790.6 335.8 790.6 333.4V324.6M767.4 340.6C767.4 342.4 770 343.8 774 344.4"/>
</g>
<path d="M776.6 343.6A7.2 7.2 0 1 1 786.2 351" stroke="#2d5f9e" stroke-width="2.2"/>
<path d="M774.2 339.8L776.8 344.6L781.6 342" stroke="#2d5f9e" stroke-width="2.2"/>
</g>
<rect x="828" y="314" width="2" height="40" fill="#555"/>
<!-- doc -->
<g fill="none" stroke-linecap="round" stroke-linejoin="round">
<path d="M859.2 325C859.2 322.4 860.8 320.8 863.4 320.8H875.6L883.2 328.2V346.8C883.2 349.4 881.6 351 879 351H863.4C860.8 351 859.2 349.4 859.2 346.8Z" stroke="#8e8e8e" stroke-width="2"/>
<path d="M875.6 320.8V325.4C875.6 327.2 876.6 328.2 878.4 328.2H883.2" stroke="#8e8e8e" stroke-width="2"/>
<path d="M864.6 333H871.4M864.6 337.1H877.8M864.6 341.1H873.6M864.6 345.1H877.8" stroke="#3d8ff0" stroke-width="1.8" stroke-linecap="butt"/>
</g>
<path d="M888.8 342H899.2L894 347.8Z" fill="#3d8ff0"/>
<!-- filter -->
<path d="M933.8 325.4C933.8 323.6 934.8 322.6 936.6 322.6H958C959.8 322.6 960.8 323.6 960.8 325.4V328.4L950.4 339.4V344.6L943.4 350.6V339.4L933.8 328.4Z" fill="none" stroke="#8e8e8e" stroke-width="2" stroke-linejoin="round"/>
<path d="M935.2 327H954.6" stroke="#3d8ff0" stroke-width="2"/>
<!-- sort -->
<g fill="none" stroke-linejoin="round">
<path d="M1008.6 320V350" stroke="#3d8ff0" stroke-width="2.2"/>
<path d="M1002.4 344.4L1008.6 350.4L1014.8 344.4" stroke="#3d8ff0" stroke-width="2.4" stroke-linecap="round"/>
<path d="M1016 323H1033M1016 330.9H1033M1020.4 338.9H1033M1020.4 346.9H1033" stroke="#8e8e8e" stroke-width="2"/>
</g>
<!-- grid -->
<g fill="none">
<rect x="1071.6" y="321.4" width="30.4" height="30.4" rx="4" stroke="#8e8e8e" stroke-width="2"/>
<path d="M1071.6 331.6H1102M1071.6 341.6H1102" stroke="#8e8e8e" stroke-width="2"/>
<rect x="1081.6" y="321.4" width="10.4" height="30.4" stroke="#3d8ff0" stroke-width="2.2"/>
</g>
<rect x="1134" y="314" width="2" height="40" fill="#555"/>
<!-- import -->
<g fill="none" stroke-linecap="round" stroke-linejoin="round">
<path d="M1174.6 349.6H1172.4C1170.4 349.6 1168.8 348 1168.8 346V325.6C1168.8 323.6 1170.4 322 1172.4 322H1188.2C1190.2 322 1191.8 323.6 1191.8 325.6V328.6" stroke="#8e8e8e" stroke-width="2"/>
<path d="M1195.2 349.4C1195.2 343 1191 338.8 1184.6 338.8H1178.6M1184 333.2L1178 339L1184 344.8" stroke="#62c23e" stroke-width="2.4"/>
</g>
<!-- export -->
<g fill="none" stroke-linecap="round" stroke-linejoin="round">
<path d="M1243.6 349.6H1241.4C1239.4 349.6 1237.8 348 1237.8 346V325.6C1237.8 323.6 1239.4 322 1241.4 322H1257.2C1259.2 322 1260.8 323.6 1260.8 325.6V331" stroke="#8e8e8e" stroke-width="2"/>
<path d="M1248.4 335.8C1248.4 341.6 1251.6 344.8 1257.6 344.8H1265.4M1259.8 339L1265.6 344.8L1259.8 350.6" stroke="#f0a030" stroke-width="2.4"/>
</g>
<!-- db 101 -->
<g fill="none" stroke="#8e8e8e" stroke-width="2">
<ellipse cx="1319.6" cy="323.8" rx="11.4" ry="3.4"/>
<path d="M1308.2 323.8V347C1308.2 349 1312 350.4 1318 350.6M1308.2 331.6C1308.2 333.6 1312 335 1318 335.2M1308.2 339.4C1308.2 341.4 1312 342.8 1318 343M1331 323.8V330"/>
</g>
<rect x="1317.6" y="329.8" width="21.6" height="22" rx="3.4" fill="#3d8ff0"/>
<text x="1328.4" y="340" font-family="Liberation Sans" font-weight="700" font-size="9.6" fill="#fff" text-anchor="middle">101</text>
<text x="1328.4" y="349.6" font-family="Liberation Sans" font-size="9.2" fill="#fff" text-anchor="middle">ABC</text>
<!-- chart outline bars -->
<g fill="none" stroke="#3d8ff0" stroke-width="2.2">
<rect x="1378.6" y="328.6" width="5" height="16.6" rx="2.5"/>
<rect x="1386.6" y="320.6" width="5" height="20.4" rx="2.5"/>
<rect x="1394.6" y="332.6" width="5" height="18.8" rx="2.5"/>
<rect x="1402.6" y="326.6" width="5" height="18.6" rx="2.5"/>
</g>

<!-- ========== FOOTER ========== -->
<g stroke-linecap="butt">
<path d="M640 1474V1494M630 1484H650" stroke="#c9c9c9" stroke-width="3.4"/>
<path d="M674 1484H694" stroke="#c9c9c9" stroke-width="3.4"/>
<path d="M740.6 1483L748.6 1492L764 1474.6" fill="none" stroke="#6b6b6b" stroke-width="3.4"/>
<path d="M789.6 1475.4L806.4 1492.4M806.4 1475.4L789.6 1492.4" stroke="#777" stroke-width="3.4"/>
<path d="M871.2 1479A8.6 8.6 0 1 0 872.2 1488" fill="none" stroke="#c9c9c9" stroke-width="3.4"/>
<path d="M865.4 1474.4L874.6 1473.4L873.6 1482.6Z" fill="#c9c9c9"/>
<rect x="900" y="1474" width="20" height="20" rx="2.4" fill="#6b6b6b"/>
</g>
<g fill="#c4c4c4" transform="translate(0 1.4)">
<rect x="1618" y="1475" width="3.6" height="19"/>
<rect x="1630" y="1482.6" width="12" height="3.6"/>
<path d="M1623.4 1484.4L1633 1475.6V1493.2Z"/>
<rect x="1668.6" y="1482.6" width="11.6" height="3.6"/>
<path d="M1660.4 1484.4L1670 1475.6V1493.2Z"/>
<rect x="1781" y="1482.6" width="11.6" height="3.6"/>
<path d="M1801 1484.4L1791.4 1475.6V1493.2Z"/>
<rect x="1819.6" y="1482.6" width="12" height="3.6"/>
<path d="M1838.2 1484.4L1828.6 1475.6V1493.2Z"/>
<rect x="1840.4" y="1475" width="3.6" height="19"/>
</g>
<rect x="1696.5" y="1468.5" width="65" height="33" fill="#2a2a2a" stroke="#3a3a3a" stroke-width="1"/>
<!-- gear -->
<g transform="translate(1890 1487.6) rotate(22.5)">
<path d="M8.22 -2.54 L11.17 -2.26 L11.17 2.26 L8.22 2.54 L7.61 4.01 L9.50 6.30 L6.30 9.50 L4.01 7.61 L2.54 8.22 L2.26 11.17 L-2.26 11.17 L-2.54 8.22 L-4.01 7.61 L-6.30 9.50 L-9.50 6.30 L-7.61 4.01 L-8.22 2.54 L-11.17 2.26 L-11.17 -2.26 L-8.22 -2.54 L-7.61 -4.01 L-9.50 -6.30 L-6.30 -9.50 L-4.01 -7.61 L-2.54 -8.22 L-2.26 -11.17 L2.26 -11.17 L2.54 -8.22 L4.01 -7.61 L6.30 -9.50 L9.50 -6.30 L7.61 -4.01Z" fill="#c4c4c4"/>
<circle r="8.8" fill="#c4c4c4"/>
<circle r="4.4" fill="#1e1e1e"/>
</g>
<!-- grid view (blue) -->
<g fill="none" stroke="#3d8ff0" stroke-width="2.2">
<rect x="1949" y="1475.6" width="26" height="25.4"/>
<path d="M1949 1484.2H1975M1949 1492.6H1975M1957.6 1476V1501M1966.2 1476V1501"/>
</g>
<rect x="1948" y="1474.6" width="28" height="3" fill="#3d8ff0"/>
<!-- form view -->
<g fill="none" stroke="#a8a8a8" stroke-width="2.2">
<rect x="2005" y="1475.6" width="26" height="25.4"/>
<rect x="2013" y="1482.4" width="14.6" height="4.8"/>
<rect x="2013" y="1490.8" width="14.6" height="4.8"/>
<path d="M2009 1481V1488.6M2009 1490V1497"/>
</g>
<rect x="2004" y="1474.6" width="28" height="3" fill="#a8a8a8"/>
<!-- ========== RIGHT PANEL ========== -->
<!-- info -->
<circle cx="2422" cy="265.9" r="13.9" fill="none" stroke="#3d8ff0" stroke-width="4.2"/>
<circle cx="2422" cy="260.1" r="2.2" fill="#3d8ff0"/>
<rect x="2419.8" y="263.9" width="4.4" height="10.3" fill="#3d8ff0"/>
<!-- DDL -->
<rect x="2457.1" y="253.1" width="25.6" height="25.6" fill="none" stroke="#5d5d5d" stroke-width="2.4"/>
<text x="2470.4" y="269.3" font-family="Liberation Sans" font-weight="700" font-size="11.4" fill="#646464" text-anchor="middle" textLength="19.5" lengthAdjust="spacingAndGlyphs">DDL</text>
<!-- split -->
<rect x="2505.2" y="253.1" width="25.6" height="25.6" fill="none" stroke="#5d5d5d" stroke-width="2.4"/>
<rect x="2514" y="253" width="8" height="26" fill="#5d5d5d"/>
<path d="M2505 261H2531M2505 270.8H2531" stroke="#5d5d5d" stroke-width="2"/>
<!-- dolphin outline -->
<path transform="translate(2110.2 514.2) scale(1.18)" d="M3.2 3.2C5.6 3.1 8 3.5 9.6 4.6C13 6.6 15.6 9.6 18.5 13.4C21 16.8 23.6 20.4 26.6 22.8L28.8 22.4L27.6 25L29.6 29C26.2 29 23.4 28.4 20.8 27.3C18.4 26.3 15.6 25.5 13.2 24.8L11.6 24.4C11.2 22.8 11.2 21.2 10.8 20.2C9.6 20.8 8.8 21.6 8.2 22.6C7.4 20.4 7 17.8 6.6 15.4C6 12.2 5 9.2 4.4 7.2C4 5.6 3.6 4.2 3.2 3.2Z" fill="none" stroke="#8a8a8a" stroke-width="1.5" stroke-linejoin="round"/>
<!-- db outline -->
<g fill="none" stroke="#7c7c7c" stroke-width="2">
<ellipse cx="2130" cy="566" rx="12" ry="3.8"/>
<path d="M2118 566V585.6C2118 587.8 2123.4 589.4 2130 589.4C2136.6 589.4 2142 587.8 2142 585.6V566M2118 572.6C2118 574.8 2123.4 576.4 2130 576.4C2136.6 576.4 2142 574.8 2142 572.6M2118 579.2C2118 581.4 2123.4 583 2130 583C2136.6 583 2142 581.4 2142 579.2"/>
</g>
</svg><div class="t" style="position:absolute;left:1701.5px;top:1475.24px;font-size:22.4px;line-height:22.4px;height:22.4px;color:#e6e6e6;font-weight:400;white-space:nowrap;-webkit-text-stroke:0.35px #e6e6e6;">1</div></div></div><div style="position:absolute;left:112px;top:76px;width:2764px;height:1484px;border-radius:21px;box-shadow:inset 0 0 0 2px #6a6a6a;pointer-events:none"></div>
</body></html>
